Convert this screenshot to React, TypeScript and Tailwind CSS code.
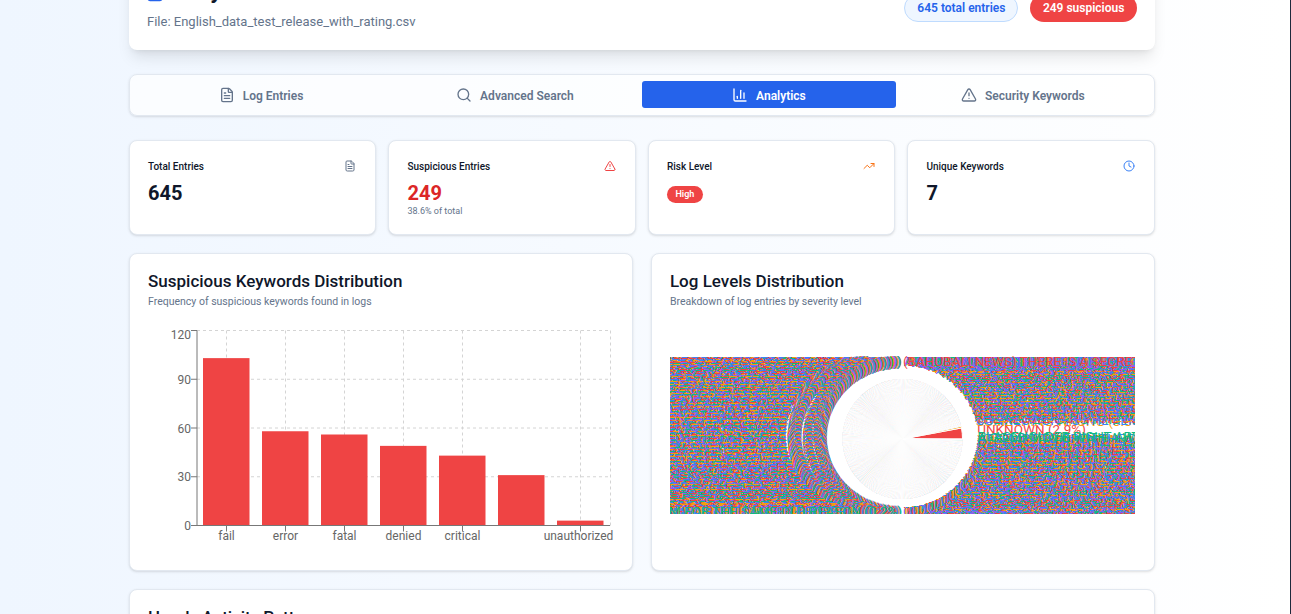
import { ChartColumn, Clock, FileText, Search, TrendingUp, TriangleAlert } from "lucide-react";
import type { ReactNode } from "react";

const COLORS = ["#ef4444", "#f59e0b", "#3b82f6", "#10b981", "#8b5cf6"];

const BARS = [
  { name: "fail", value: 103 },
  { name: "error", value: 58 },
  { name: "fatal", value: 56 },
  { name: "denied", value: 49 },
  { name: "critical", value: 43 },
  { name: "", value: 31 },
  { name: "unauthorized", value: 3 },
];

const MESSAGES = [
  "WHEN THE SERVICE RESTARTED THE OLD SESSION WAS NOT CLOSED PROPERLY",
  "PLACEHOLDER RIGHT ARTIST FOR THE NEXT RELEASE OF THE ALBUM TRACK",
  "CONNECTION TO THE REMOTE HOST WAS LOST DURING THE NIGHTLY BACKUP",
  "THE REVIEW SAYS THIS PRODUCT ARRIVED LATE AND THE BOX WAS DAMAGED",
  "USER LOGGED IN FROM AN UNKNOWN DEVICE AND CHANGED THE PASSWORD TWICE",
  "THE ANSWER IS IN THE CONFIGURATION FILE THAT NOBODY EVER LOOKS AT",
  "ATTEMPT TO OPEN THE DATABASE TIMED OUT AFTER THREE FULL MINUTES",
  "A GOOD MOVIE WITH A WEAK ENDING THAT TRIES TO EXPLAIN EVERYTHING",
  "REQUEST QUEUE IS GROWING FASTER THAN THE WORKERS CAN DRAIN THE JOBS",
  "THIS IS WHY THE DISK FILLED UP AGAIN ON THE PRIMARY STORAGE NODE",
  "NOTHING WAS WRITTEN TO THE AUDIT TRAIL BETWEEN MIDNIGHT AND NOON",
];

// one slice per distinct "level": the parser took whole lines as levels
const counts = [19, 3, ...Array.from({ length: 623 }, () => 1)];
const total = counts.reduce((a, b) => a + b, 0);

const CX = 902.5;
const CY = 439;
const R = 60;
const LABEL_R = 75;

let angle = 0;
const slices = counts.map((count, i) => {
  const start = angle;
  angle += (count / total) * 360;
  return { i, count, start, end: angle, mid: (start + angle) / 2 };
});

function pointAt(deg: number, r: number) {
  const rad = (deg * Math.PI) / 180;
  return { x: CX + r * Math.cos(rad), y: CY - r * Math.sin(rad) };
}

function sectorPath(start: number, end: number) {
  const a = pointAt(start, R);
  const b = pointAt(end, R);
  return `M${CX} ${CY}L${a.x.toFixed(2)} ${a.y.toFixed(2)}A${R} ${R} 0 0 0 ${b.x.toFixed(2)} ${b.y.toFixed(2)}Z`;
}

const topRight = slices.filter((s) => s.mid < 90).length - 1;
const bottomLeft = slices.filter((s) => s.mid < 270).length - 1;

function labelFor(i: number, count: number) {
  const pct = `(${((count / total) * 100).toFixed(1)}%)`;
  if (i === 0) return `UNKNOWN ${pct}`;
  if (i === 1) return `SOMETHING WRONG ${pct}`;
  if (i === topRight) return `(BAHUBALI NEWS) THERE IS A SECRET LAYER OF THIS STORY ${pct}`;
  if (i === bottomLeft) return `ANSWER TO THE PROBLEM FOR THE SAME OLD REASON ${pct}`;
  if (i === slices.length - 1) return `PLACEHOLDER RIGHT ARTIST FOR THE NEXT RELEASE ${pct}`;
  return `${MESSAGES[i % MESSAGES.length]} ${pct}`;
}

function colorFor(i: number) {
  if (i === topRight) return COLORS[0];
  if (i === bottomLeft) return COLORS[3];
  if (i === slices.length - 1) return COLORS[3];
  return COLORS[i % COLORS.length];
}

function Card({ className, children }: { className?: string; children: ReactNode }) {
  return <div className={`rounded-lg border border-[#e2e8f0] bg-white shadow-sm ${className ?? ""}`}>{children}</div>;
}

function Tab({ icon, label, active }: { icon: ReactNode; label: string; active?: boolean }) {
  return (
    <div
      className={`flex h-[27px] items-center justify-center gap-[8px] rounded-[3px] text-[12px] font-semibold ${
        active ? "bg-[#2563eb] text-white" : "text-[#64748b]"
      }`}
    >
      {icon}
      <span className="pt-[2px]">{label}</span>
    </div>
  );
}

function StatCard({ title, icon, children }: { title: string; icon: ReactNode; children: ReactNode }) {
  return (
    <Card className="h-[95px] px-[18px] pt-[17px]">
      <div className="flex h-[16px] items-center justify-between pr-px">
        <span className="text-[10px] font-medium text-[#0f172a]">{title}</span>
        {icon}
      </div>
      {children}
    </Card>
  );
}

function BarChartSvg() {
  const y = (v: number) => 525.5 - (v / 120) * 195;
  const ticks = [226.5, 285.5, 344.5, 403.5, 462.5, 580.5];
  return (
    <svg viewBox="148 325 468 225" className="mt-[16px] block h-[225px] w-[468px]">
      <g stroke="#d4d4d4" strokeDasharray="3 3">
        {[120, 90, 60, 30].map((v) => (
          <line key={v} x1={197} x2={610} y1={y(v)} y2={y(v)} />
        ))}
        {[...ticks, 610.5].map((x) => (
          <line key={x} x1={x} x2={x} y1={330.5} y2={525.5} />
        ))}
      </g>
      {BARS.map((b, i) => (
        <rect key={i} x={203 + i * 59} y={y(b.value)} width={46.5} height={525.5 - y(b.value)} fill="#ef4444" />
      ))}
      <g stroke="#777">
        <line x1={197} x2={197} y1={330.5} y2={525.5} />
        <line x1={197} x2={610} y1={525.5} y2={525.5} />
        {[120, 90, 60, 30, 0].map((v) => (
          <line key={v} x1={191} x2={197} y1={y(v)} y2={y(v)} />
        ))}
        {ticks.map((x) => (
          <line key={x} x1={x} x2={x} y1={525.5} y2={531.5} />
        ))}
      </g>
      <g fill="#666" fontSize={12}>
        <text x={191} y={339} textAnchor="end">120</text>
        <text x={191} y={384} textAnchor="end">90</text>
        <text x={191} y={433} textAnchor="end">60</text>
        <text x={191} y={481} textAnchor="end">30</text>
        <text x={191} y={530} textAnchor="end">0</text>
        {BARS.map((b, i) => (
          <text key={i} x={i === 6 ? 578.5 : ticks[i]} y={540} textAnchor="middle">
            {b.name}
          </text>
        ))}
      </g>
    </svg>
  );
}

function PieChartSvg() {
  return (
    <svg viewBox="670 356 465 158" className="mt-[47px] block h-[158px] w-[465px]">
      {slices.map((s) => (
        <path key={s.i} d={sectorPath(s.start, s.end)} fill={COLORS[s.i % COLORS.length]} stroke="#fff" />
      ))}
      <g fontSize={13.5}>
        {slices.map((s) => {
          const p = pointAt(s.mid, LABEL_R);
          const right = p.x > CX;
          const x = !right && s.i % 4 === 0 ? p.x - 3 : p.x;
          return (
            <text
              key={s.i}
              x={x.toFixed(1)}
              y={(p.y + 2).toFixed(1)}
              fill={colorFor(s.i)}
              textAnchor={right ? "start" : "end"}
            >
              {labelFor(s.i, s.count)}
            </text>
          );
        })}
      </g>
    </svg>
  );
}

export default function App() {
  return (
    <div className="h-[614px] overflow-hidden border-r border-[#1e293b] bg-gradient-to-r from-[#eff6ff] to-white pl-[129px] font-['Roboto',sans-serif]">
      <div className="w-[1025.9px]">
        {/* page is scrolled: header card runs off the top */}
        <div className="-mt-[50px] flex h-[100px] justify-between rounded-lg bg-white px-[18px] pt-[24px] shadow-lg">
          <div>
            <div className="flex h-[32px] items-center">
              <FileText size={20} className="-ml-[2px] mt-[4px] text-[#2563eb]" />
              <h1 className="-ml-[3px] text-[24px] font-semibold text-[#0f172a]">Analysis Results</h1>
            </div>
            <p className="mt-[6px] text-[13px] leading-5 text-[#64748b]">File: English_data_test_release_with_rating.csv</p>
          </div>
          <div className="flex h-[48px] items-start gap-3 pt-[20px]">
            <span className="flex h-[28px] items-center rounded-full border border-[#bfdbfe] bg-[#eff6ff] px-3 text-[12px] font-semibold text-[#2563eb]">
              645 total entries
            </span>
            <span className="flex h-[28px] items-center rounded-full bg-[#ef4444] px-[12.5px] text-[12px] font-semibold text-white">
              249 suspicious
            </span>
          </div>
        </div>

        <Card className="mt-[24px] grid h-[42px] grid-cols-4 content-start bg-white/70 px-[4px] pt-[6px]">
          <Tab icon={<FileText size={16} />} label="Log Entries" />
          <Tab icon={<Search size={16} />} label="Advanced Search" />
          <Tab icon={<ChartColumn size={16} />} label="Analytics" active />
          <Tab icon={<TriangleAlert size={16} />} label="Security Keywords" />
        </Card>

        <div className="mt-[24px] grid grid-cols-4 gap-[12px]">
          <StatCard title="Total Entries" icon={<FileText size={12} className="text-[#64748b]" />}>
            <div className="mt-[5px] text-[20px] leading-7 font-bold text-[#0f172a]">645</div>
          </StatCard>
          <StatCard title="Suspicious Entries" icon={<TriangleAlert size={12} className="text-[#ef4444]" />}>
            <div className="mt-[5px] text-[20px] leading-7 font-bold text-[#dc2626]">249</div>
            <div className="-mt-[2px] text-[9px] leading-3 text-[#64748b]">38.6% of total</div>
          </StatCard>
          <StatCard title="Risk Level" icon={<TrendingUp size={12} className="text-[#f97316]" />}>
            <span className="mt-[12px] flex h-[17px] w-[36px] items-center justify-center rounded-full bg-[#ef4444] text-[9px] font-semibold text-white">
              High
            </span>
          </StatCard>
          <StatCard title="Unique Keywords" icon={<Clock size={12} className="text-[#3b82f6]" />}>
            <div className="mt-[5px] text-[20px] leading-7 font-bold text-[#0f172a]">7</div>
          </StatCard>
        </div>

        <div className="mt-[18px] grid grid-cols-2 gap-[18px]">
          <Card className="h-[318px] px-[18px] pt-[15px]">
            <h2 className="text-[17px] leading-6 font-medium text-[#0f172a]">Suspicious Keywords Distribution</h2>
            <p className="mt-[2px] text-[10.5px] leading-[14px] text-[#64748b]">Frequency of suspicious keywords found in logs</p>
            <BarChartSvg />
          </Card>
          <Card className="h-[318px] px-[18px] pt-[15px]">
            <h2 className="text-[17px] leading-6 font-medium text-[#0f172a]">Log Levels Distribution</h2>
            <p className="mt-[2px] text-[10.5px] leading-[14px] text-[#64748b]">Breakdown of log entries by severity level</p>
            <PieChartSvg />
          </Card>
        </div>

        <Card className="mt-[18px] h-[318px] px-[18px] pt-[15px]">
          <h2 className="text-[17px] leading-6 font-medium text-[#0f172a]">Hourly Activity Patterns</h2>
        </Card>
      </div>
    </div>
  );
}
